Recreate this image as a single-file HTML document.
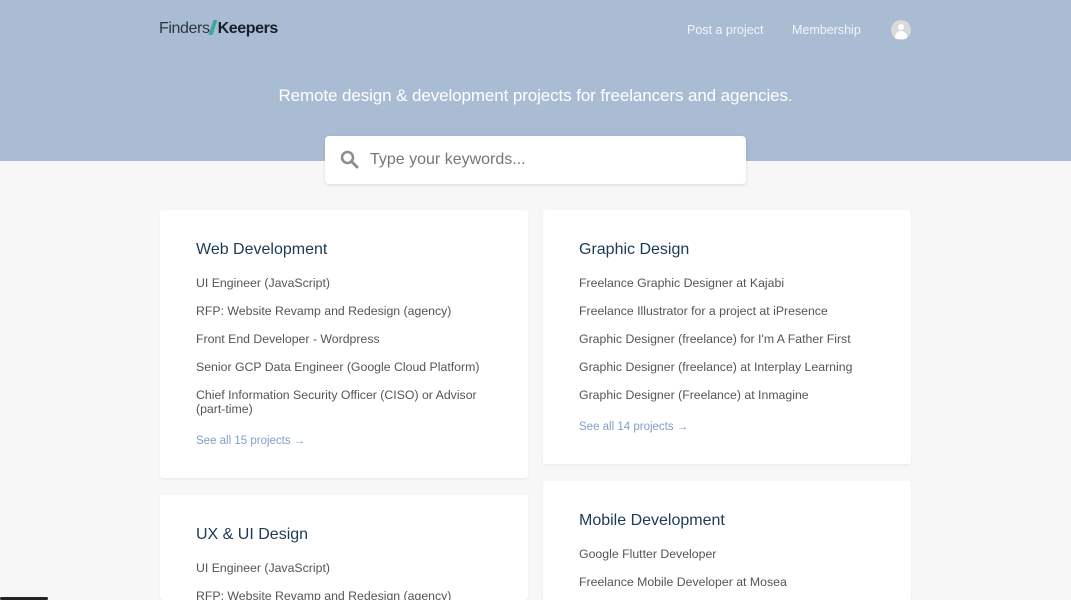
<!DOCTYPE html><html><head><style>
*{margin:0;padding:0;box-sizing:border-box}
html{width:1071px;height:600px;overflow:hidden}
body{width:1071px;height:600px;overflow:hidden;background:#f7f7f7;font-family:"Liberation Sans",sans-serif;position:relative}
.hdr{position:absolute;left:0;top:0;width:1071px;height:161px;background:#aabcd3}
.logo{position:absolute;left:159px;top:20px;font-size:16px;color:#2d3640;letter-spacing:-0.4px}
.logo b{color:#16202a}
.logo i{display:inline-block;width:4px;height:15px;background:#3aa7a3;transform:skewX(-18deg);margin:0 3px 0 1px;vertical-align:-2px}
.nav{position:absolute;top:23px;font-size:12.5px;color:#f2f5f9}
.av{position:absolute;left:891px;top:20px;width:20px;height:20px;border-radius:50%;background:#d9d9d9;overflow:hidden}
.av:before{content:"";position:absolute;left:7px;top:4px;width:6px;height:6px;border-radius:50%;background:#fff}
.av:after{content:"";position:absolute;left:4px;top:11px;width:12px;height:8px;border-radius:6px 6px 2px 2px;background:#fff}
.tag{position:absolute;top:86px;width:1071px;text-align:center;font-size:17px;color:#fff;letter-spacing:-0.1px}
.srch{position:absolute;left:325px;top:136px;width:421px;height:48px;background:#fff;border-radius:4px;box-shadow:0 1px 3px rgba(0,0,0,.12)}
.srch span{position:absolute;left:45px;top:15px;font-size:16px;color:#777}
.card{position:absolute;width:368px;background:#fff;border-radius:3px;box-shadow:0 1px 2px rgba(0,0,0,.06);padding:31px 36px;overflow:hidden}
.card h2{font-weight:normal;font-size:16px;color:#1c3a56;margin-bottom:17px}
.card p{font-size:12.3px;color:#555;line-height:14px;margin-bottom:14px}
.card a{font-size:11.5px;color:#7f9fc6;display:block;margin-top:19px}
</style></head><body>
<div class="hdr"></div>
<div class="logo">Finders<i></i><b>Keepers</b></div>
<div class="nav" style="left:687px">Post a project</div>
<div class="nav" style="left:792px">Membership</div>
<div class="av"></div>
<div class="tag">Remote design &amp; development projects for freelancers and agencies.</div>
<div class="srch"><svg style="position:absolute;left:15px;top:14px" width="19" height="19" viewBox="0 0 19 19"><circle cx="7.5" cy="7.5" r="5.5" fill="none" stroke="#8e8e8e" stroke-width="2.6"/><path d="M11.5 11.5L17 17" stroke="#8e8e8e" stroke-width="3" stroke-linecap="round"/></svg><span>Type your keywords...</span></div>
<div class="card" style="left:160px;top:210px;height:268px"><h2>Web Development</h2><p>UI Engineer (JavaScript)</p><p>RFP: Website Revamp and Redesign (agency)</p><p>Front End Developer - Wordpress</p><p>Senior GCP Data Engineer (Google Cloud Platform)</p><p>Chief Information Security Officer (CISO) or Advisor (part-time)</p><a>See all 15 projects →</a></div>
<div class="card" style="left:543px;top:210px;height:254px"><h2>Graphic Design</h2><p>Freelance Graphic Designer at Kajabi</p><p>Freelance Illustrator for a project at iPresence</p><p>Graphic Designer (freelance) for I'm A Father First</p><p>Graphic Designer (freelance) at Interplay Learning</p><p>Graphic Designer (Freelance) at Inmagine</p><a>See all 14 projects →</a></div>
<div class="card" style="left:160px;top:495px;height:105px"><h2>UX &amp; UI Design</h2><p>UI Engineer (JavaScript)</p><p>RFP: Website Revamp and Redesign (agency)</p></div>
<div class="card" style="left:543px;top:481px;height:119px"><h2>Mobile Development</h2><p>Google Flutter Developer</p><p>Freelance Mobile Developer at Mosea</p></div>
<div style="position:absolute;left:0;top:597px;width:48px;height:3px;background:#222;border-radius:2px"></div>
</body></html>
